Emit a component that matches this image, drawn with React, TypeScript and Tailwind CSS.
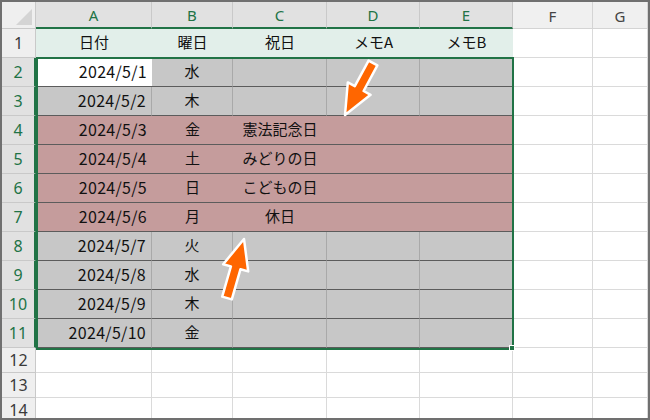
const cols = ["A", "B", "C", "D", "E", "F", "G"]

const header = ["日付", "曜日", "祝日", "メモA", "メモB"]

const rows = [
  { date: "2024/5/1", day: "水", note: "" },
  { date: "2024/5/2", day: "木", note: "" },
  { date: "2024/5/3", day: "金", note: "憲法記念日" },
  { date: "2024/5/4", day: "土", note: "みどりの日" },
  { date: "2024/5/5", day: "日", note: "こどもの日" },
  { date: "2024/5/6", day: "月", note: "休日" },
  { date: "2024/5/7", day: "火", note: "" },
  { date: "2024/5/8", day: "水", note: "" },
  { date: "2024/5/9", day: "木", note: "" },
  { date: "2024/5/10", day: "金", note: "" },
]

const jp = { fontFamily: '"Noto Sans CJK JP", "Noto Sans", sans-serif' }
const ui = { fontFamily: '"Noto Sans", "Open Sans", sans-serif' }

function RowHeader({ n }: { n: number }) {
  const selected = n >= 2 && n <= 11
  return (
    <div
      style={ui}
      className={
        selected
          ? "flex items-center justify-center border-b border-r-2 border-b-[#c9c9c9] border-r-[#217346] bg-[#e1e1e1] text-[16px] text-[#217346]"
          : "flex items-center justify-center border-b border-r border-[#c9c9c9] bg-[#efefef] text-[16px] text-[#3a3a3a]"
      }
    >
      {n}
    </div>
  )
}

function DataCell({ r, c }: { r: number; c: number }) {
  // r: sheet row number, c: column index (0 = A)
  if (c > 4) {
    return <div className="border-b border-r border-[#dadada] bg-white" />
  }
  if (r === 1) {
    return (
      <div style={jp} className="flex items-center justify-center bg-[#e2efea] pb-0.5 text-[15px] text-[#111]">
        {header[c]}
      </div>
    )
  }
  if (r > 11) {
    return <div className="border-b border-r border-[#dadada] bg-white" />
  }
  const row = rows[r - 2]
  const pink = r >= 4 && r <= 7
  let fill = pink ? "bg-[#c59c9c]" : "bg-[#c7c7c7] border-r border-r-[#a9a9a9]"
  if (r === 2 && c === 0) fill = "bg-white"
  const text = c === 0 ? row.date : c === 1 ? row.day : c === 2 ? row.note : ""
  const align = c === 0 ? "justify-end pr-[5px] text-[16px] tracking-[0.3px]" : "justify-center text-[15px]"
  return (
    <div
      style={jp}
      className={`flex items-center ${align} ${fill} border-b border-b-[#5c5c5c] pb-0.5 text-[#111]`}
    >
      {text}
    </div>
  )
}

function Arrows() {
  return (
    <svg className="pointer-events-none absolute left-0 top-0" width="650" height="420">
      <g fill="#ff6600" stroke="#ffffff" strokeWidth="2.5" strokeLinejoin="round">
        <polygon points="375.4,63.4 361.6,89 368.6,92.8 343,113 345.8,80.4 352.8,84.2 366.6,58.6" />
        <polygon points="229.8,297.4 238.5,267.2 246.2,269.4 242,237 221.2,262.2 228.9,264.4 220.2,294.6" />
      </g>
    </svg>
  )
}

export default function App() {
  const sheetRows = Array.from({ length: 14 }, (_, i) => i + 1)
  return (
    <div className="relative h-[420px] w-[650px] overflow-hidden border-2 border-[#707070] bg-white">
      <div className="grid grid-cols-[34px_116px_81px_94px_93px_93px_80px_1fr] grid-rows-[27px_repeat(11,29px)_repeat(3,25px)]">
        {/* corner */}
        <div className="relative border-b border-r border-[#c9c9c9] bg-[#efefef]">
          <svg className="absolute bottom-[3px] right-[3px]" width="16" height="16">
            <polygon points="0,16 16,0 16,16" fill="#d4d4d4" />
          </svg>
        </div>
        {cols.map((col, i) => (
          <div
            key={col}
            style={ui}
            className={
              i < 5
                ? "flex items-center justify-center border-r border-b-2 border-r-[#c9c9c9] border-b-[#217346] bg-[#e1e1e1] pt-0.5 text-[15px] text-[#217346]"
                : "flex items-center justify-center border-r border-b border-[#d4d4d4] bg-[#f0f0f0] pt-0.5 text-[15px] text-[#444]"
            }
          >
            {col}
          </div>
        ))}
        {sheetRows.map((r) => [
          <RowHeader key={`h${r}`} n={r} />,
          ...cols.map((_, c) => <DataCell key={`${r}-${c}`} r={r} c={c} />),
        ])}
      </div>

      {/* selection A2:E11 */}
      <div className="pointer-events-none absolute left-[34px] top-[55px] h-[293px] w-[478px] border-2 border-[#217346]" />
      <div className="absolute left-[507px] top-[343px] h-[6px] w-[6px] border border-white bg-[#217346]" />

      <Arrows />
    </div>
  )
}
